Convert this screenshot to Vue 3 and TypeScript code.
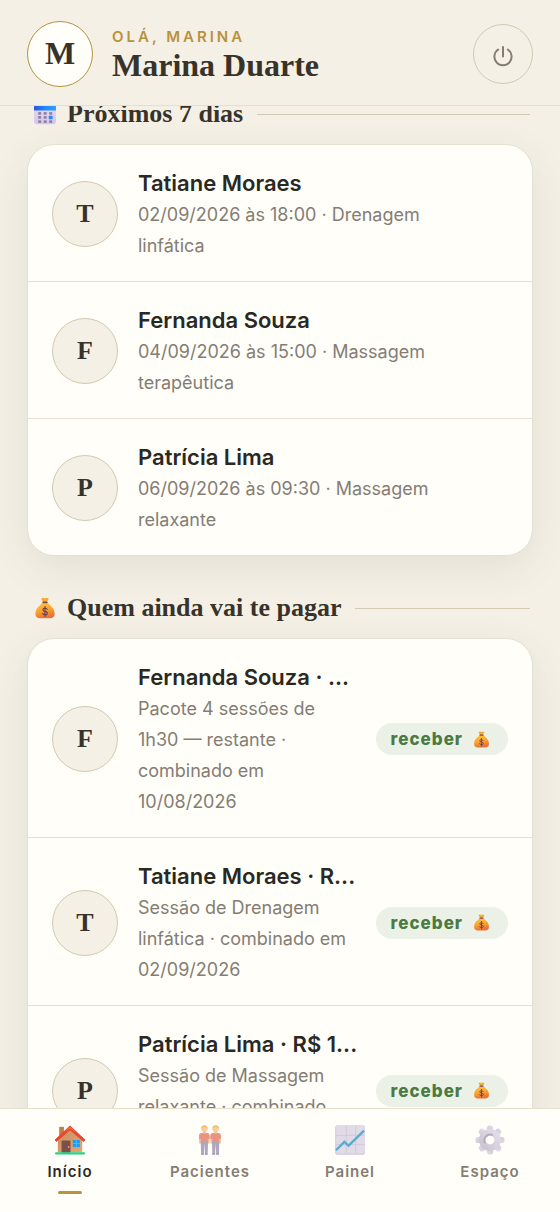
<script setup lang="ts">
interface Visit {
  name: string
  lines: string[]
}

interface NavItem {
  id: string
  label: string
  active: boolean
}

const upcoming: Visit[] = [
  { name: 'Tatiane Moraes', lines: ['02/09/2026 às 18:00 · Drenagem', 'linfática'] },
  { name: 'Fernanda Souza', lines: ['04/09/2026 às 15:00 · Massagem', 'terapêutica'] },
  { name: 'Patrícia Lima', lines: ['06/09/2026 às 09:30 · Massagem', 'relaxante'] },
]

const pending: Visit[] = [
  {
    name: 'Fernanda Souza · ...',
    lines: ['Pacote 4 sessões de', '1h30 — restante ·', 'combinado em', '10/08/2026'],
  },
  {
    name: 'Tatiane Moraes · R...',
    lines: ['Sessão de Drenagem', 'linfática · combinado em', '02/09/2026'],
  },
  {
    name: 'Patrícia Lima · R$ 1...',
    lines: ['Sessão de Massagem', 'relaxante · combinado', 'em 06/09/2026'],
  },
]

const nav: NavItem[] = [
  { id: 'home', label: 'Início', active: true },
  { id: 'people', label: 'Pacientes', active: false },
  { id: 'chart', label: 'Painel', active: false },
  { id: 'gear', label: 'Espaço', active: false },
]

const teeth: number[] = [0, 45, 90, 135, 180, 225, 270, 315]
</script>

<template>
  <div class="app">
    <svg class="sprite" aria-hidden="true">
      <defs>
        <linearGradient id="gold" x1="0" y1="0" x2="0.3" y2="1">
          <stop offset="0" stop-color="#ffc83d" />
          <stop offset="0.55" stop-color="#fba52f" />
          <stop offset="1" stop-color="#e8723a" />
        </linearGradient>
        <linearGradient id="bluebar" x1="0" x2="1">
          <stop offset="0" stop-color="#2b52e0" />
          <stop offset="0.5" stop-color="#1f8bff" />
          <stop offset="1" stop-color="#2f9dff" />
        </linearGradient>
        <linearGradient id="page" x1="0" y1="0" x2="0" y2="1">
          <stop offset="0" stop-color="#e6def0" />
          <stop offset="1" stop-color="#d6c4ee" />
        </linearGradient>
        <linearGradient id="wall" x1="0" y1="0" x2="1" y2="1">
          <stop offset="0" stop-color="#c98d5e" />
          <stop offset="1" stop-color="#e2a873" />
        </linearGradient>
        <linearGradient id="metal" x1="0" y1="1" x2="1" y2="0">
          <stop offset="0" stop-color="#b5adc2" />
          <stop offset="1" stop-color="#d6d0e2" />
        </linearGradient>
        <symbol id="bag" viewBox="0 0 32 32">
          <path d="M11 2q2-2 5 0q3-2 5 0q1 1-1 3l-2 3h-4l-2-3q-2-2-1-3z" fill="#f7a92e" />
          <path
            d="M13 8h6q2 1 4 3.500q7 5.500 7 12.500q0 7-7 7H9q-7 0-7-7q0-7 7-12.500q2-2.500 4-3.500z"
            fill="url(#gold)"
          />
          <rect x="12" y="6.500" width="8" height="2.500" rx="1.200" fill="#7a4a5c" />
          <path
            d="M19 18q-.8-1.800-3-1.800q-3 0-3 2.200t3 2.500q3.300.3 3.300 2.700t-3.300 2.400q-2.600 0-3.300-2.200M16 14v14.300"
            fill="none"
            stroke="#6e4350"
            stroke-width="1.700"
            stroke-linecap="round"
          />
        </symbol>
      </defs>
    </svg>

    <header class="topbar">
      <div class="avatar owner">M</div>
      <div class="greeting">
        <p class="hello">OLÁ, MARINA</p>
        <h1>Marina Duarte</h1>
      </div>
      <button class="power" type="button" aria-label="Sair">
        <svg viewBox="0 0 24 24" width="24" height="24">
          <path d="M12 3v9.500M7.200 5.500a8.600 8.600 0 1 0 9.600 0" />
        </svg>
      </button>
    </header>

    <main class="content">
      <section>
        <h2 class="title">
          <svg class="title-icon" viewBox="0 0 32 32">
            <rect x="0" y="2" width="32" height="29" rx="5" fill="url(#page)" />
            <path d="M0 11V6q0-4 4-4h24q4 0 4 4v5z" fill="url(#bluebar)" />
            <g fill="#8f84a4">
              <rect x="6" y="13" width="4.500" height="4" rx="1" />
              <rect x="14" y="13" width="4.500" height="4" rx="1" />
              <rect x="22" y="13" width="4.500" height="4" rx="1" />
              <rect x="6" y="19" width="4.500" height="4" rx="1" />
              <rect x="14" y="19" width="4.500" height="4" rx="1" />
              <rect x="6" y="25" width="4.500" height="4" rx="1" />
              <rect x="14" y="25" width="4.500" height="4" rx="1" />
              <rect x="22" y="25" width="4.500" height="4" rx="1" />
            </g>
            <rect x="21.500" y="18.500" width="5.500" height="5" rx="1" fill="#1f8bff" />
          </svg>
          <span>Próximos 7 dias</span>
        </h2>
        <ul class="card">
          <li v-for="v in upcoming" :key="v.name" class="row">
            <div class="avatar">{{ v.name.charAt(0) }}</div>
            <div class="info">
              <h3>{{ v.name }}</h3>
              <p><span v-for="line in v.lines" :key="line" class="line">{{ line }}</span></p>
            </div>
          </li>
        </ul>
      </section>

      <section>
        <h2 class="title">
          <svg class="title-icon"><use href="#bag" /></svg>
          <span>Quem ainda vai te pagar</span>
        </h2>
        <ul class="card">
          <li v-for="v in pending" :key="v.name" class="row">
            <div class="avatar">{{ v.name.charAt(0) }}</div>
            <div class="info">
              <h3>{{ v.name }}</h3>
              <p><span v-for="line in v.lines" :key="line" class="line">{{ line }}</span></p>
            </div>
            <button class="pill" type="button">
              receber
              <svg class="pill-icon"><use href="#bag" /></svg>
            </button>
          </li>
        </ul>
      </section>
    </main>

    <nav class="tabs">
      <a v-for="n in nav" :key="n.id" :href="'#' + n.id" class="tab" :class="{ active: n.active }">
        <svg v-if="n.id === 'home'" class="tab-icon" viewBox="0 0 32 32">
          <path d="M4.500 2h5v12h-5z" fill="#b98148" />
          <path d="M3 15L16 4l13 11v14H3z" fill="url(#wall)" />
          <path d="M0 16L16 1l16 15-1.500 1.500L16 5 1.500 17.500z" fill="#ea4530" stroke="#e8452f" />
          <path d="M9 8.500l7-6.500 7 6.500-7-5z" fill="#ff7a35" />
          <rect x="7" y="16.500" width="9.500" height="13" rx="1" fill="#7d4f4b" />
          <circle cx="14.500" cy="23.500" r="1" fill="#d9a05a" />
          <rect x="19" y="16" width="7.500" height="7.500" fill="#1d9bf0" />
          <path d="M19 19.700h7.500M22.700 16v7.500" stroke="#4db8ff" stroke-width="1" />
          <rect x="0" y="29" width="32" height="2.500" rx="1.200" fill="#27d183" />
        </svg>
        <svg v-else-if="n.id === 'people'" class="tab-icon" viewBox="0 0 32 32">
          <g v-for="x in [0, 12]" :key="x" :transform="'translate(' + x + ' 0)'">
            <path d="M5.500 12v7M14.500 12v7" stroke="#e9ac62" stroke-width="2.200" stroke-linecap="round" />
            <path d="M6 16h8l-.5 15h-2.900l-.6-11-.6 11H6.500z" fill="#8d84a6" />
            <path d="M7 8.500h6q2.600 0 2.600 3V15h-2v2H6.400v-2h-2v-3.500q0-3 2.600-3z" fill="#e26750" />
            <rect x="8.600" y="6" width="2.800" height="3.500" fill="#e2a052" />
            <circle cx="10" cy="4.400" r="3.300" fill="#f3bb78" />
            <path d="M6.400 4.200q0-4 3.600-4t3.600 4q-1.300-2-3.600-2t-3.600 2z" fill="#e0a63c" />
            <path d="M6.500 31h3M10.500 31h3" stroke="#6c6580" stroke-width="1.200" />
          </g>
        </svg>
        <svg v-else-if="n.id === 'chart'" class="tab-icon" viewBox="0 0 32 32">
          <rect x="0" y="0" width="32" height="32" rx="3" fill="#c9c2d6" />
          <rect x="1.500" y="0" width="30.500" height="30" rx="3" fill="#d3cde0" />
          <path
            d="M12 1v29M22 1v29M1 11h31M1 21h31"
            stroke="#bdb5cb"
            stroke-width="1"
          />
          <path d="M1 27l9-9 4.500 4L31 6" fill="none" stroke="#1688b8" stroke-width="2.400" />
        </svg>
        <svg v-else class="tab-icon" viewBox="0 0 32 32">
          <g fill="url(#metal)">
            <rect
              v-for="t in teeth"
              :key="t"
              x="12.800"
              y="0.500"
              width="6.400"
              height="9"
              rx="2.800"
              :transform="'rotate(' + t + ' 16 16)'"
            />
          </g>
          <circle cx="16" cy="16" r="8.200" fill="none" stroke="url(#metal)" stroke-width="7" />
          <path d="M11 19.500a6 6 0 0 1 8-8.500" fill="none" stroke="#938b9f" stroke-width="2" />
        </svg>
        <span>{{ n.label }}</span>
      </a>
    </nav>
  </div>
</template>

<style>
body {
  margin: 0;
  background: #f5f0e6;
}
</style>

<style scoped>
.app {
  position: relative;
  height: 100vh;
  overflow: hidden;
  background: #f5f0e6;
  color: #2a2823;
  font-family: Inter, "Liberation Sans", sans-serif;
}

.sprite {
  position: absolute;
  width: 0;
  height: 0;
}

h1,
h2,
h3,
p,
ul {
  margin: 0;
  padding: 0;
}

.topbar {
  position: fixed;
  top: 0;
  left: 0;
  right: 0;
  z-index: 2;
  box-sizing: border-box;
  display: flex;
  align-items: center;
  gap: 19px;
  height: 106px;
  padding: 2px 27px 0;
  background: #f5f0e6;
  border-bottom: 1px solid #e5dfd0;
}

.avatar {
  flex: none;
  box-sizing: border-box;
  width: 66px;
  height: 66px;
  border: 1px solid #d3c9b1;
  border-radius: 50%;
  background: #f5f0e6;
  display: flex;
  align-items: center;
  justify-content: center;
  color: #38332a;
  font-family: "Liberation Serif", serif;
  font-size: 26px;
  font-weight: 700;
}

.owner {
  border-color: #b8923f;
  background: #fffef9;
  font-size: 32px;
}

.greeting {
  flex: 1;
  padding-top: 3px;
}

.hello {
  color: #b8923f;
  font-size: 15px;
  line-height: 20px;
  font-weight: 600;
  letter-spacing: 3px;
}

h1 {
  color: #38332a;
  font-family: "Liberation Serif", serif;
  font-size: 32px;
  line-height: 36px;
  font-weight: 700;
}

.power {
  flex: none;
  width: 60px;
  height: 60px;
  padding: 4px 0 0;
  border: 1px solid #d3c9b1;
  border-radius: 50%;
  background: transparent;
  display: flex;
  align-items: center;
  justify-content: center;
}

.power path {
  fill: none;
  stroke: #857d71;
  stroke-width: 2;
  stroke-linecap: round;
}

.content {
  display: flex;
  flex-direction: column;
  gap: 38px;
  padding: 100px 27px 0;
}

.title {
  display: flex;
  align-items: center;
  gap: 11px;
  padding: 0 3px 0 7px;
  margin-bottom: 16px;
  color: #38332a;
  font-family: "Liberation Serif", serif;
  font-size: 26px;
  line-height: 28px;
  font-weight: 700;
}

.title::after {
  content: "";
  flex: 1;
  height: 1px;
  margin-left: 3px;
  background: #d3c9b1;
}

.title-icon {
  flex: none;
  width: 22px;
  height: 22px;
}

.card {
  list-style: none;
  border: 1px solid #e5e0d1;
  border-radius: 27px;
  background: #fffef9;
  box-shadow: 0 12px 40px rgba(70, 70, 40, 0.09);
}

.row {
  display: flex;
  align-items: center;
  gap: 20px;
  padding: 22px 24px 20px;
}

.row + .row {
  border-top: 1px solid #e5e0d1;
}

.info {
  flex: 1;
  min-width: 0;
}

h3 {
  font-size: 22px;
  line-height: 32px;
  font-weight: 600;
  white-space: nowrap;
}

.info p {
  color: #857d74;
  font-size: 18px;
  line-height: 31px;
}

.line {
  display: block;
  white-space: nowrap;
}

.pill {
  flex: none;
  display: flex;
  align-items: center;
  gap: 10px;
  height: 32px;
  padding: 0 18px 0 15px;
  border: 0;
  border-radius: 16px;
  background: #ebf1e6;
  color: #4a7a42;
  font-family: Inter, "Liberation Sans", sans-serif;
  font-size: 17px;
  font-weight: 800;
  letter-spacing: 1px;
}

.pill-icon {
  width: 17px;
  height: 17px;
}

.tabs {
  position: fixed;
  left: 0;
  right: 0;
  bottom: 0;
  z-index: 2;
  display: grid;
  grid-template-columns: repeat(4, 1fr);
  height: 103px;
  border-top: 1px solid #e8e0cc;
  background: #fffef9;
}

.tab {
  display: flex;
  flex-direction: column;
  align-items: center;
  padding-top: 16px;
  color: #857d74;
  font-size: 15px;
  line-height: 20px;
  font-weight: 600;
  letter-spacing: 1px;
  text-decoration: none;
}

.tab-icon {
  width: 30px;
  height: 30px;
  margin-bottom: 7px;
  opacity: 0.7;
}

.active {
  color: #2a2823;
}

.active .tab-icon {
  opacity: 1;
}

.active::after {
  content: "";
  width: 24px;
  height: 3px;
  margin-top: 9px;
  border-radius: 2px;
  background: #b8923f;
}
</style>
